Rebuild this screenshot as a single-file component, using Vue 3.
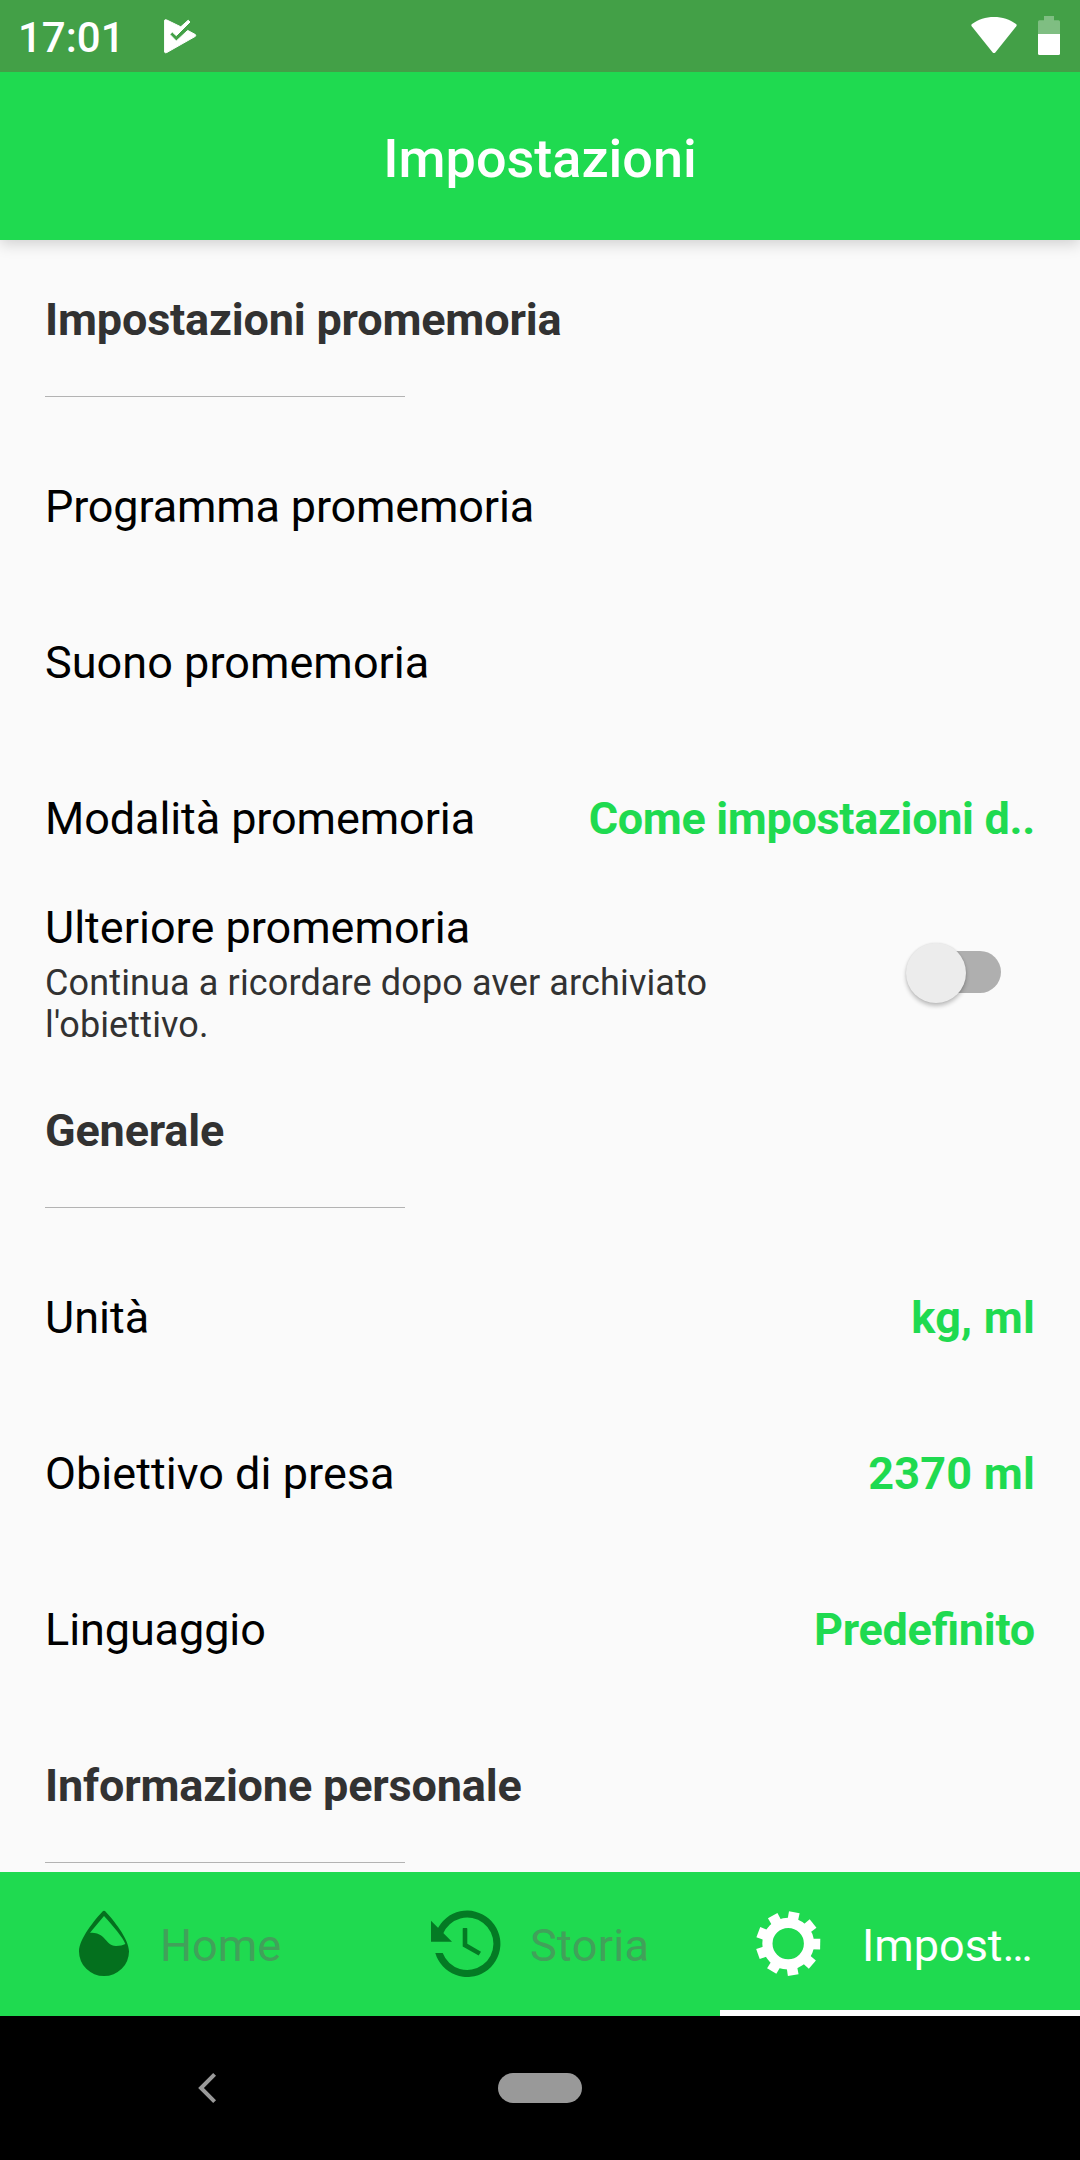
<script setup>
// "track" and "valueTrack" are letter-spacing values in px
const sections = [
  {
    title: 'Impostazioni promemoria',
    track: -0.18,
    rows: [
      { label: 'Programma promemoria', track: -0.17 },
      { label: 'Suono promemoria', track: 0.04 },
      { label: 'Modalità promemoria', track: -0.1, value: 'Come impostazioni d..', valueTrack: -0.33 },
      {
        label: 'Ulteriore promemoria',
        track: 0,
        note: "Continua a ricordare dopo aver archiviato l'obiettivo.",
      },
    ],
  },
  {
    title: 'Generale',
    track: -0.18,
    rows: [
      { label: 'Unità', track: 0, value: 'kg, ml', valueTrack: 0.2 },
      { label: 'Obiettivo di presa', track: 0.04, value: '2370 ml', valueTrack: 0.2 },
      { label: 'Linguaggio', track: -0.1, value: 'Predefinito', valueTrack: -0.25 },
    ],
  },
  { title: 'Informazione personale', track: -0.18, rows: [] },
]
const teeth = [0, 40, 80, 120, 160, 200, 240, 280, 320]
const spacing = (px) => (px ? { letterSpacing: `${px}px` } : null)
</script>

<template>
  <div class="screen">
    <div class="status">
      <span class="clock">17:01</span>
      <svg class="play" width="40" height="40" viewBox="0 0 40 40">
        <path
          d="M4.6 4.2Q5.2 3.2 6.8 4L20.8 10.8L28.2 4.2L30 6L16.3 19.7L12.3 16L9.9 18.4L16.3 25L27.7 14.4L35.4 18.6Q36 19.5 35.4 20.3L6.8 36.5Q5.2 37.2 4.6 36.2Z"
          fill="#fff" stroke="#fff" stroke-width="1" stroke-linejoin="round"
        />
      </svg>
      <svg class="wifi" width="46" height="37" viewBox="0 0 46 37">
        <path d="M23 0C14.6 0 7.2 2.6 1 7.1Q-.2 8 .7 9.3L21.7 35.4Q23 36.8 24.3 35.4L45.3 9.3Q46.2 8 45 7.1C38.8 2.6 31.4 0 23 0Z" fill="#fff" />
      </svg>
      <svg class="battery" width="22" height="39" viewBox="0 0 22 39">
        <path d="M6 0H16V4.3H20.5Q22 4.3 22 5.8V18H0V5.8Q0 4.3 1.5 4.3H6Z" fill="#fff" fill-opacity=".32" />
        <path d="M0 18H22V37.5Q22 39 20.5 39H1.5Q0 39 0 37.5Z" fill="#fff" />
      </svg>
    </div>

    <header class="appbar">Impostazioni</header>

    <main class="content">
      <section v-for="s in sections" :key="s.title">
        <h2 class="heading" :style="spacing(s.track)">{{ s.title }}</h2>
        <div class="divider"></div>
        <template v-for="r in s.rows" :key="r.label">
          <div v-if="r.note" class="row row-note">
            <div class="texts">
              <div class="label">{{ r.label }}</div>
              <div class="note">{{ r.note }}</div>
            </div>
            <div class="switch"><div class="thumb"></div></div>
          </div>
          <div v-else class="row">
            <span class="label" :style="spacing(r.track)">{{ r.label }}</span>
            <span v-if="r.value" class="value" :style="spacing(r.valueTrack)">{{ r.value }}</span>
          </div>
        </template>
      </section>
    </main>

    <nav class="tabs">
      <div class="tab home">
        <svg width="72" height="72" viewBox="0 0 72 72">
          <path
            fill="#04701e" fill-rule="evenodd"
            d="M34.5 3.5Q36 2 37.5 3.5C45 11.5 61 31 61 43.5A25 24.5 0 0 1 11 43.5C11 31 27 11.5 34.5 3.5ZM36 8L22 24.7C28 24.7 32 26 35.5 29.5C40 34 42 38 48 38C52 38 55 37 57.3 36C55.5 30 45 18 36 8Z"
          />
        </svg>
        <span>Home</span>
      </div>
      <div class="tab history">
        <svg width="72" height="72" viewBox="0 0 72 72" fill="#047a24">
          <path d="M5.3 45A33.2 33.2 0 1 0 7 22L12.9 26A26.2 26.2 0 1 1 12.7 45Z" />
          <path d="M1 12.7V33.7H22Z" />
          <path d="M33.4 20H36.6Q37.3 20 37.3 20.7V35.8L51 43.7L48.7 47.4L32.7 38.4V20.7Q32.7 20 33.4 20Z" />
        </svg>
        <span>Storia</span>
      </div>
      <div class="tab settings">
        <svg width="72" height="72" viewBox="0 0 72 72">
          <g transform="translate(36.2 35.6)" fill="#fff">
            <circle r="20.8" fill="none" stroke="#fff" stroke-width="10.2" />
            <path v-for="a in teeth" :key="a" d="M22 -5.2L32 -5.4V5.4L22 5.2Z" :transform="`rotate(${a + 1})`" />
          </g>
        </svg>
        <span>Impost…</span>
      </div>
    </nav>

    <div class="navbar">
      <svg class="back" width="20" height="32" viewBox="0 0 20 32">
        <path d="M16.6 2.4L3 16L16.6 29.6" fill="none" stroke="#999" stroke-width="4" />
      </svg>
      <div class="pill"></div>
    </div>
  </div>
</template>

<style>
body {
  margin: 0;
}
</style>

<style scoped>
.screen {
  width: 1080px;
  height: 2160px;
  display: flex;
  flex-direction: column;
  overflow: hidden;
  background: #fafafa;
  color: #000;
  font-family: Roboto, sans-serif;
  font-size: 45px;
}
svg {
  display: block;
  flex: none;
}
.status {
  position: relative;
  z-index: 2;
  flex: none;
  box-sizing: border-box;
  height: 72px;
  display: flex;
  align-items: flex-start;
  padding: 16px 20px 0 18px;
  background: #43a047;
  color: #fff;
}
.clock {
  width: 142px;
  font-size: 42px;
  font-weight: 500;
  line-height: 43px;
}
.wifi {
  margin: 1px 21px 0 auto;
}
.appbar {
  position: relative;
  z-index: 1;
  flex: none;
  box-sizing: border-box;
  height: 168px;
  padding-top: 4px;
  display: flex;
  align-items: center;
  justify-content: center;
  background: #1fda50;
  color: #fff;
  font-size: 54px;
  font-weight: 500;
  box-shadow: 0 4px 14px rgba(0, 0, 0, 0.17);
}
.content {
  flex: 1;
  min-height: 0;
  overflow: hidden;
  padding: 2px 45px 0;
}
.heading {
  box-sizing: border-box;
  height: 154px;
  margin: 0;
  padding-top: 2px;
  font-size: 45px;
  font-weight: 700;
  line-height: 152px;
  color: #323232;
}
.divider {
  width: 360px;
  height: 1px;
  margin-bottom: 32px;
  background: #b3b3b3;
}
.row {
  box-sizing: border-box;
  height: 156px;
  display: flex;
  align-items: center;
  justify-content: space-between;
}
.label {
  line-height: 54px;
}
.value {
  color: #1fda50;
  font-weight: 700;
  line-height: 54px;
  font-feature-settings: 'liga' 1;
}
.row-note {
  align-items: flex-start;
  padding-top: 4px;
}
.texts {
  width: 720px;
}
.note {
  margin-top: 7px;
  font-size: 36px;
  line-height: 42px;
  letter-spacing: 0.13px;
  color: #323232;
}
.switch {
  width: 90px;
  height: 42px;
  margin: 50px 34px 0 0;
  border-radius: 21px;
  background: #afafaf;
  display: flex;
  align-items: center;
}
.thumb {
  flex: none;
  width: 60px;
  height: 60px;
  margin: 1px 0 0 -5px;
  border-radius: 50%;
  background: #ececec;
  box-shadow: 0 3px 4px rgba(0, 0, 0, 0.24), 0 0 2px rgba(0, 0, 0, 0.1);
}
.tabs {
  flex: none;
  height: 144px;
  display: grid;
  grid-template-columns: repeat(3, 360px);
  background: #1fda50;
}
.tab {
  box-sizing: border-box;
  display: flex;
  align-items: center;
  color: #41a15a;
}
.tab span {
  padding-top: 3px;
}
.home {
  padding-left: 68px;
  gap: 20px;
}
.history {
  padding-left: 70px;
  gap: 28px;
  letter-spacing: 0.35px;
}
.settings {
  padding-left: 32px;
  gap: 38px;
  color: #fff;
  box-shadow: inset 0 -6px #fff;
}
.navbar {
  flex: none;
  height: 144px;
  display: flex;
  align-items: center;
  background: #000;
}
.back {
  margin-left: 198px;
}
.pill {
  width: 84px;
  height: 30px;
  margin-left: 280px;
  border-radius: 15px;
  background: #999;
}
</style>
